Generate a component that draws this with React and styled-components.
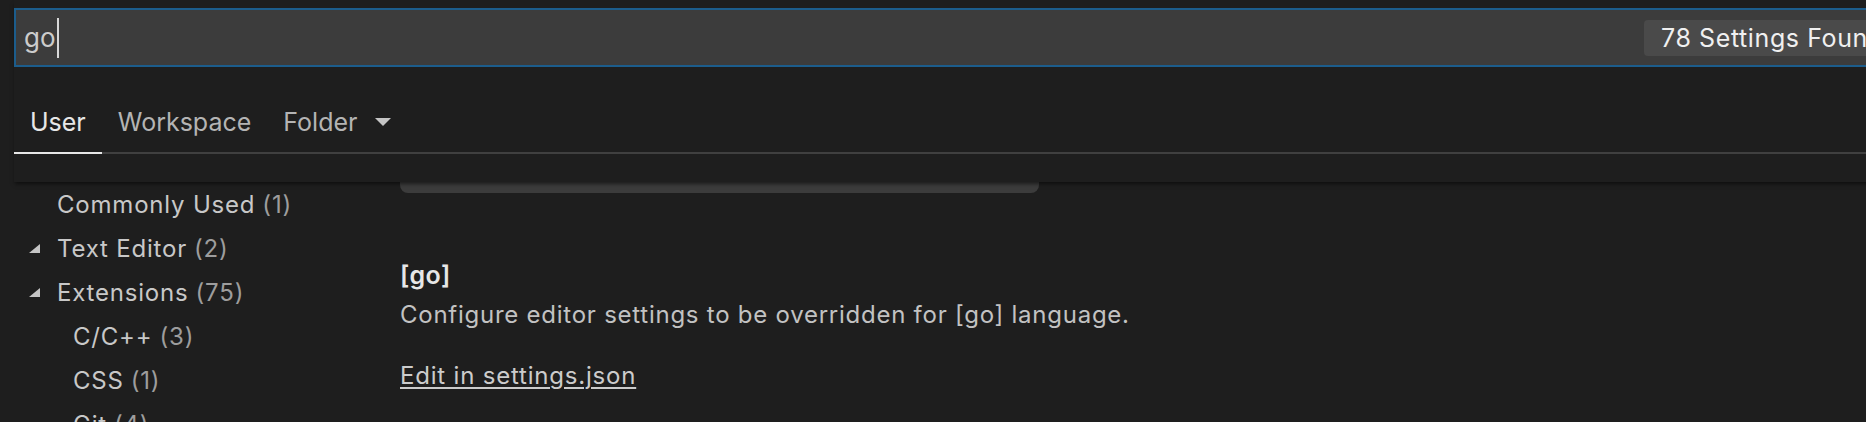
import styled, { createGlobalStyle } from "styled-components";

const GlobalStyle = createGlobalStyle`
  html, body {
    margin: 0;
    height: 100%;
    overflow: hidden;
    background: #1e1e1e;
  }
  body {
    font-family: Inter, "Noto Sans", sans-serif;
    -webkit-font-smoothing: antialiased;
  }
`;

const Page = styled.div`
  width: 2200px;
  padding-left: 14px;
`;

const Header = styled.header`
  position: relative;
  z-index: 2;
  padding-top: 8px;
  padding-bottom: 28px;
  background: #1e1e1e;
  box-shadow: 0 3px 4px -1px rgba(0, 0, 0, 0.55);
`;

const SearchBox = styled.div`
  display: flex;
  align-items: center;
  height: 55px;
  border: 2px solid #1c5d8c;
  background: #3c3c3c;
`;

const SearchInput = styled.div`
  flex: 0 0 1628px;
  display: flex;
  align-items: center;
  padding-left: 8px;
  box-sizing: border-box;
  font-size: 26px;
  color: #cccccc;
`;

const Caret = styled.span`
  width: 2px;
  height: 40px;
  margin-left: 1px;
  background: #d8d8d8;
`;

const CountBadge = styled.div`
  padding: 0 17px;
  height: 36px;
  line-height: 36px;
  border-radius: 4px;
  background: #4a4a4a;
  color: #f0f0f0;
  font-size: 25px;
  letter-spacing: 0.6px;
  white-space: nowrap;
`;

const TabBar = styled.nav`
  display: flex;
  margin-top: 39px;
  border-bottom: 2px solid #404040;
`;

const Tab = styled.div`
  display: flex;
  align-items: center;
  gap: 18px;
  padding: 0 16px 14px;
  margin-bottom: -2px;
  line-height: 32px;
  font-size: 25px;
  color: ${(p) => (p.$active ? "#e7e7e7" : "#b4b4b4")};
  border-bottom: 2px solid ${(p) => (p.$active ? "#e7e7e7" : "transparent")};
`;

const Main = styled.div`
  display: flex;
`;

const Toc = styled.aside`
  flex: 0 0 386px;
`;

const TocRow = styled.div`
  display: flex;
  align-items: center;
  height: 44px;
  padding-left: ${(p) => 15 + (p.$level - 1) * 16}px;
  font-size: 24px;
  letter-spacing: 0.8px;
  white-space: nowrap;
`;

const Twistie = styled.span`
  flex: 0 0 28px;
  display: flex;
  align-items: center;
`;

const TocLabel = styled.span`
  color: #c8c8c8;
`;

const TocCount = styled.span`
  margin-left: 7px;
  color: #9d9d9d;
`;

const Content = styled.section`
  flex: 1;
`;

const PeekControl = styled.div`
  width: 639px;
  height: 11px;
  background: #3c3c3c;
  border-radius: 0 0 8px 8px;
`;

const SettingTitle = styled.div`
  margin-top: 64px;
  line-height: 36px;
  font-size: 25px;
  font-weight: 600;
  letter-spacing: 0.4px;
  color: #e7e7e7;
`;

const SettingDesc = styled.div`
  margin-top: 4px;
  line-height: 36px;
  font-size: 24px;
  letter-spacing: 0.75px;
  color: #c2c2c2;
`;

const EditLink = styled.a`
  display: block;
  margin-top: 25px;
  line-height: 36px;
  font-size: 24px;
  letter-spacing: 0.8px;
  color: #cccccc;
  text-decoration: underline;
  text-underline-offset: 3px;
  text-decoration-thickness: 2px;
`;

const Arrow = () => (
  <svg width="16" height="8" viewBox="0 0 16 8">
    <path d="M0 0 H16 L8 8 Z" fill="#c5c5c5" />
  </svg>
);

const Expanded = () => (
  <svg width="11" height="9" viewBox="0 0 11 9">
    <path d="M11 0 V9 H0 Z" fill="#c5c5c5" />
  </svg>
);

const tocItems = [
  { label: "Commonly Used", count: 1, level: 1 },
  { label: "Text Editor", count: 2, level: 1, open: true },
  { label: "Extensions", count: 75, level: 1, open: true },
  { label: "C/C++", count: 3, level: 2 },
  { label: "CSS", count: 1, level: 2 },
  { label: "Git", count: 4, level: 2 },
];

export default function App() {
  return (
    <Page>
      <GlobalStyle />
      <Header>
        <SearchBox>
          <SearchInput>
            go
            <Caret />
          </SearchInput>
          <CountBadge>78 Settings Found</CountBadge>
        </SearchBox>
        <TabBar>
          <Tab $active>User</Tab>
          <Tab>Workspace</Tab>
          <Tab>
            Folder
            <Arrow />
          </Tab>
        </TabBar>
      </Header>
      <Main>
        <Toc>
          {tocItems.map((item) => (
            <TocRow key={item.label} $level={item.level}>
              <Twistie>{item.open && <Expanded />}</Twistie>
              <TocLabel>{item.label}</TocLabel>
              <TocCount>({item.count})</TocCount>
            </TocRow>
          ))}
        </Toc>
        <Content>
          <PeekControl />
          <SettingTitle>[go]</SettingTitle>
          <SettingDesc>
            Configure editor settings to be overridden for [go] language.
          </SettingDesc>
          <EditLink href="#">Edit in settings.json</EditLink>
        </Content>
      </Main>
    </Page>
  );
}
